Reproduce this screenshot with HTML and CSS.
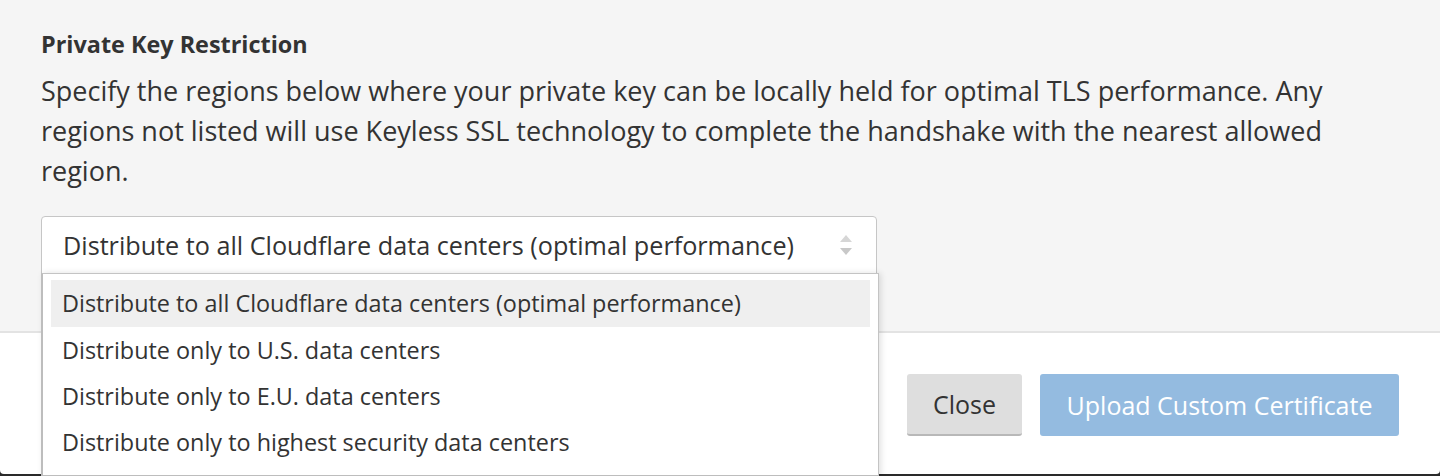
FILE: index.html
```html
<!DOCTYPE html>
<html>
<head>
<meta charset="utf-8">
<link rel="stylesheet" href="styles.css">
</head>
<body>
<div class="modal">
  <div class="modal-body">
    <h3 class="title">Private Key Restriction</h3>
    <p class="desc">Specify the regions below where your private key can be locally held for optimal TLS performance. Any regions not listed will use Keyless SSL technology to complete the handshake with the nearest allowed region.</p>
    <div class="select-wrap">
      <div class="select">
        <span class="select-value">Distribute to all Cloudflare data centers (optimal performance)</span>
        <svg class="arrows" width="14" height="22" viewBox="0 0 14 22"><path d="M7 1 L13 8 L1 8 Z" fill="#d6d6d6"/><path d="M1 14 L13 14 L7 21 Z" fill="#c8c8c8"/></svg>
      </div>
      <ul class="menu">
        <li class="opt active">Distribute to all Cloudflare data centers (optimal performance)</li>
        <li class="opt">Distribute only to U.S. data centers</li>
        <li class="opt">Distribute only to E.U. data centers</li>
        <li class="opt">Distribute only to highest security data centers</li>
      </ul>
    </div>
  </div>
  <div class="modal-footer">
    <button class="btn btn-close">Close</button>
    <button class="btn btn-primary">Upload Custom Certificate</button>
  </div>
</div>
</body>
</html>
```
FILE: styles.css
```css
html, body {
  margin: 0;
  padding: 0;
}
body {
  background: #2a2a2a;
  font-family: "Open Sans", "Noto Sans", sans-serif;
  color: #333;
  height: 476px;
  overflow: hidden;
}
.modal {
  background: #fff;
  height: 474px;
  border-radius: 0 0 4px 4px;
  display: flex;
  flex-direction: column;
}
.modal-body {
  background: #f5f5f5;
  height: 331px;
  border-bottom: 2px solid #e3e3e3;
  padding: 0 41px;
  box-sizing: content-box;
}
.title {
  margin: 0;
  padding-top: 29px;
  font-size: 23.4px;
  font-weight: 700;
  line-height: 30px;
  color: #333;
}
.desc {
  margin: 12px 0 0;
  font-size: 27px;
  line-height: 40px;
  color: #333;
}
.select-wrap {
  position: relative;
  width: 836px;
  margin-top: 25px;
}
.select {
  height: 56px;
  border: 1px solid #c6c6c6;
  border-radius: 4px 4px 0 0;
  background: #fff;
  display: flex;
  align-items: center;
  justify-content: space-between;
  padding: 0 23px 0 21px;
}
.select-value {
  font-size: 25.2px;
  color: #333;
  white-space: nowrap;
}
.arrows {
  display: block;
}
.menu {
  position: absolute;
  left: 0;
  top: 57px;
  width: 819px;
  margin: 0;
  padding: 6px 8px 0 8px;
  list-style: none;
  background: #fff;
  border: 1px solid #c4c4c4;
  border-left: 2px solid #bdbdbd;
  border-bottom: 2px solid #bdbdbd;
  height: 195px;
  box-shadow: 2px 0 6px rgba(0,0,0,0.12);
}
.opt {
  height: 46px;
  line-height: 46px;
  padding-left: 11px;
  font-size: 23.4px;
  color: #333;
  white-space: nowrap;
}
.opt.active {
  background: #efefef;
  height: 47px;
  line-height: 47px;
}
.modal-footer {
  flex: 1;
  display: flex;
  justify-content: flex-end;
  align-items: center;
  gap: 18px;
  padding: 2px 41px 0 0;
}
.btn {
  font-family: "Open Sans", "Noto Sans", sans-serif;
  font-size: 25px;
  height: 62px;
  border: none;
  border-radius: 3px;
  padding: 0;
  cursor: pointer;
}
.btn-close {
  background: #dedede;
  color: #333;
  border-bottom: 2px solid #b8b8b8;
  width: 115px;
}
.btn-primary {
  background: #94bbe0;
  color: #fff;
  width: 359px;
}
```
